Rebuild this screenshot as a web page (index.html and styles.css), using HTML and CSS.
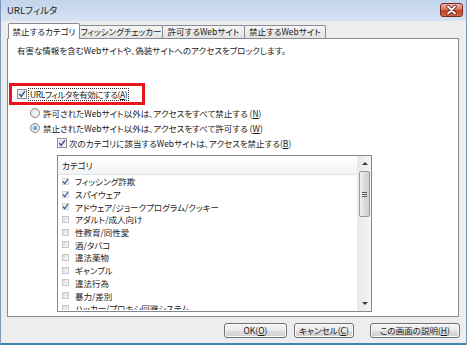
FILE: index.html
```html
<!DOCTYPE html>
<html lang="ja">
<head>
<meta charset="utf-8">
<title>URLフィルタ</title>
<link rel="stylesheet" href="styles.css">
</head>
<body>
<div class="window">
  <div class="titlebar">
    <span class="title">URLフィルタ</span>
    <span class="close"><svg width="21" height="12" viewBox="0 0 21 12"><path d="M7 2.5 L14 9.5 M14 2.5 L7 9.5" stroke="#5a1c14" stroke-width="3.4" stroke-linecap="round"/><path d="M7 2.5 L14 9.5 M14 2.5 L7 9.5" stroke="#ffffff" stroke-width="1.8" stroke-linecap="round"/></svg></span>
  </div>
  <div class="tabs">
    <div class="tab active t1">禁止するカテゴリ</div>
    <div class="tab t2">フィッシングチェッカー</div>
    <div class="tab t3">許可するWebサイト</div>
    <div class="tab t4">禁止するWebサイト</div>
  </div>
  <div class="panel">
    <p class="desc">有害な情報を含むWebサイトや、偽装サイトへのアクセスをブロックします。</p>
    <div class="highlight">
      <span class="cb"><svg width="8" height="8" viewBox="0 0 8 8"><path d="M1.2 4 L3.2 6.4 L6.9 1.2" fill="none" stroke="#3d5a9a" stroke-width="1.5"/></svg></span>
      <span class="focus">URLフィルタを有効にする(<u>A</u>)</span>
    </div>
    <div class="row radio-row"><span class="radio"></span><span>許可されたWebサイト以外は、アクセスをすべて禁止する (<u>N</u>)</span></div>
    <div class="row radio-row"><span class="radio on"></span><span>禁止されたWebサイト以外は、アクセスをすべて許可する (<u>W</u>)</span></div>
    <div class="row check-row"><span class="cb"><svg width="8" height="8" viewBox="0 0 8 8"><path d="M1.2 4 L3.2 6.4 L6.9 1.2" fill="none" stroke="#3d5a9a" stroke-width="1.5"/></svg></span><span>次のカテゴリに該当するWebサイトは、アクセスを禁止する(<u>B</u>)</span></div>
    <div class="listbox">
      <div class="list">
        <div class="lhead">カテゴリ</div>
        <ul class="items">
          <li><span class="lcb on"><svg width="7" height="7" viewBox="0 0 7 7"><path d="M1 3.5 L2.8 5.6 L6 1" fill="none" stroke="#3e5ea8" stroke-width="1.3"/></svg></span>フィッシング詐欺</li>
          <li><span class="lcb on"><svg width="7" height="7" viewBox="0 0 7 7"><path d="M1 3.5 L2.8 5.6 L6 1" fill="none" stroke="#3e5ea8" stroke-width="1.3"/></svg></span>スパイウェア</li>
          <li><span class="lcb on"><svg width="7" height="7" viewBox="0 0 7 7"><path d="M1 3.5 L2.8 5.6 L6 1" fill="none" stroke="#3e5ea8" stroke-width="1.3"/></svg></span>アドウェア/ジョークプログラム/クッキー</li>
          <li><span class="lcb"></span>アダルト/成人向け</li>
          <li><span class="lcb"></span>性教育/同性愛</li>
          <li><span class="lcb"></span>酒/タバコ</li>
          <li><span class="lcb"></span>違法薬物</li>
          <li><span class="lcb"></span>ギャンブル</li>
          <li><span class="lcb"></span>違法行為</li>
          <li><span class="lcb"></span>暴力/差別</li>
          <li class="partial"><span class="lcb"></span>ハッカー/プロキシ回避システム</li>
        </ul>
      </div>
      <div class="scrollbar">
        <span class="arrow"><span class="tri up"></span></span>
        <span class="thumb"><span class="grip"></span></span>
        <span class="track"></span>
        <span class="arrow"><span class="tri down"></span></span>
      </div>
    </div>
  </div>
  <div class="buttons">
    <button class="btn ok">OK(<u>O</u>)</button>
    <button class="btn cancel">キャンセル(<u>C</u>)</button>
    <button class="btn help">この画面の説明(<u>H</u>)</button>
  </div>
</div>
</body>
</html>
```

FILE: styles.css
```css
* { box-sizing: border-box; }
html, body { margin: 0; padding: 0; }
body {
  width: 467px;
  height: 345px;
  overflow: hidden;
  font-family: "Noto Sans CJK JP", "Liberation Sans", sans-serif;
  font-size: 8.5px;
  color: #1b1b1b;
  font-feature-settings: "palt";
}
.window {
  width: 467px;
  height: 345px;
  display: flex;
  flex-direction: column;
  background: #ededed;
  box-shadow: inset 1px 0 0 #7f9ab8, inset -1px 0 0 #7f9ab8, inset 0 -2px 0 #3d88b3;
}
.titlebar {
  height: 21px;
  display: flex;
  align-items: flex-start;
  padding-left: 7px;
  background: linear-gradient(#c2d4ec, #d7e3f3);
  box-shadow: inset 1px 0 0 #7f9ab8, inset -1px 0 0 #7f9ab8;
}
.title {
  font-size: 9.5px;
  line-height: 20px;
  color: #222;
}
.close {
  margin-left: auto;
  margin-right: 4px;
  margin-top: 3px;
  width: 23px;
  height: 14px;
  border: 1px solid #7a2c22;
  border-radius: 3px;
  background: linear-gradient(#eeb2a4 0%, #d97a63 45%, #c04128 55%, #d4694c 100%);
  display: flex;
  align-items: center;
  justify-content: center;
}
.close svg { display: block; }
.tabs {
  height: 17px;
  display: flex;
  align-items: flex-end;
  padding-left: 8px;
  position: relative;
  z-index: 1;
}
.tab {
  height: 13px;
  border: 1px solid #898c95;
  border-bottom: 0;
  background: linear-gradient(#f6f6f6, #e2e2e2);
  line-height: 11px;
  text-align: center;
  margin-left: -1px;
  white-space: nowrap;
  border-radius: 2px 2px 0 0;
}
.tab.active {
  height: 16px;
  margin-bottom: -1px;
  margin-left: 0;
  background: #fff;
  line-height: 15px;
  position: relative;
  z-index: 2;
}
.t1 { width: 72px; }
.t2 { width: 84px; }
.t3 { width: 83px; }
.t4 { width: 82px; }
.panel {
  margin-left: 7px;
  width: 452px;
  height: 279px;
  background: #fff;
  border: 1px solid #898c95;
  padding-top: 5px;
}
.desc {
  margin: 0 0 0 9px;
  line-height: 12px;
  height: 12px;
}
.highlight {
  margin-top: 27px;
  margin-left: 1px;
  width: 136px;
  height: 22px;
  border: 3px solid #e9141c;
  display: flex;
  align-items: center;
  padding-left: 5px;
}
.cb {
  width: 10px;
  height: 10px;
  border: 1px solid #8e8f8f;
  background: linear-gradient(135deg, #dcdcdc, #fbfbfb);
  box-shadow: inset 0 0 0 1px #f4f4f4;
  display: flex;
  align-items: center;
  justify-content: center;
  flex: none;
}
.cb svg { display: block; }
.focus {
  margin-left: 2px;
  padding: 0 1px;
  line-height: 11px;
  outline: 1px dotted #333;
  white-space: nowrap;
  letter-spacing: -0.45px;
}
.row {
  height: 15px;
  display: flex;
  align-items: center;
  white-space: nowrap;
}
.radio-row { padding-left: 22px; gap: 3px; }
.check-row { padding-left: 49px; gap: 2px; }
.radio {
  width: 10px;
  height: 10px;
  border-radius: 50%;
  border: 1px solid #8b8c8c;
  background: radial-gradient(circle at 60% 65%, #fafafa, #d8d8d8);
  flex: none;
  display: flex;
  align-items: center;
  justify-content: center;
}
.radio.on::after {
  content: "";
  width: 4px;
  height: 4px;
  border-radius: 50%;
  background: radial-gradient(circle at 40% 40%, #8ccaf2, #1b5fa8);
}
.listbox {
  margin-top: 5px;
  margin-left: 49px;
  width: 315px;
  height: 157px;
  border: 1px solid #828790;
  display: flex;
}
.list {
  flex: 1;
  overflow: hidden;
}
.lhead {
  height: 19px;
  line-height: 18px;
  padding-left: 4px;
  background: linear-gradient(#ffffff, #f2f3f5);
  border-bottom: 1px solid #e2e3e5;
}
.items {
  list-style: none;
  margin: 0;
  padding: 0;
}
.items li {
  height: 12.7px;
  display: flex;
  align-items: center;
  padding-left: 4px;
  white-space: nowrap;
}
.items li.partial {
  height: 8px;
  align-items: flex-start;
  overflow: hidden;
  line-height: 11px;
  padding-top: 1px;
}
.lcb {
  width: 7px;
  height: 7px;
  margin-right: 6px;
  border: 1px solid #c6c6c6;
  background: linear-gradient(135deg, #dedede, #f6f6f6);
  flex: none;
  position: relative;
}
.partial .lcb { margin-top: 2px; }
.lcb.on {
  border-color: #d4d4d4;
  background: #f3f3f3;
}
.lcb svg { position: absolute; left: -1px; top: -1px; }
.scrollbar {
  width: 14px;
  background: linear-gradient(90deg, #e9e9e9, #f5f5f5);
  border-left: 1px solid #eaeaea;
  display: flex;
  flex-direction: column;
  align-items: center;
}
.arrow {
  height: 15px;
  width: 100%;
  display: flex;
  align-items: center;
  justify-content: center;
  flex: none;
}
.tri {
  width: 0;
  height: 0;
  border-left: 3px solid transparent;
  border-right: 3px solid transparent;
}
.tri.up { border-bottom: 3px solid #3a3a3a; }
.tri.down { border-top: 3px solid #3a3a3a; }
.thumb {
  width: 11px;
  height: 46px;
  border: 1px solid #989898;
  border-radius: 2px;
  background: linear-gradient(90deg, #f2f2f2, #dcdcdc 50%, #cfcfcf);
  flex: none;
  display: flex;
  align-items: center;
  justify-content: center;
}
.grip {
  width: 5px;
  height: 5px;
  background: repeating-linear-gradient(#5e5e5e 0 1px, transparent 1px 2px);
}
.track { flex: 1; }
.buttons {
  margin-top: 6px;
  display: flex;
  justify-content: flex-end;
  padding-right: 7px;
}
.btn {
  height: 15px;
  padding: 0;
  font-family: inherit;
  font-size: 8.5px;
  font-feature-settings: "palt";
  color: #1b1b1b;
  line-height: 13px;
  border: 1px solid #707070;
  border-radius: 3px;
  background: linear-gradient(#f3f3f3 0%, #ebebeb 50%, #dddddd 51%, #d0d0d0 100%);
  box-shadow: inset 0 0 0 1px #fbfbfb;
  white-space: nowrap;
}
.ok { width: 63px; }
.cancel { width: 60px; margin-left: 7px; }
.help { width: 90px; margin-left: 16px; }
u { text-decoration: underline; text-underline-offset: 1px; }
```
